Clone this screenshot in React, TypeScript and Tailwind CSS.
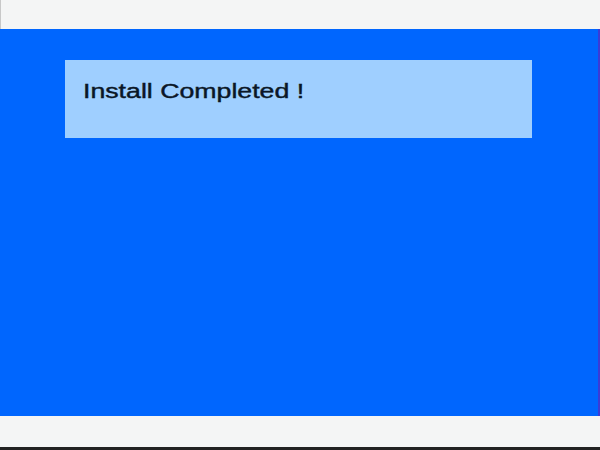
export default function App() {
  return (
    <div className="flex h-[450px] w-[600px] flex-col bg-[#f4f5f5] font-['Liberation_Sans',Arial,sans-serif]">
      <div className="h-[29px] border-l border-[#c8c8c8]" />
      <div className="h-[387px] border-r-2 border-[#3b3bd6] bg-[#0066fe] pl-[65px] pt-[31px]">
        <div className="h-[78px] w-[467px] bg-[#9fcfff] pl-[18px] pt-[21px]">
          <div className="inline-block origin-left scale-x-[1.335] text-[20px] leading-[20px] text-[#0a1626] [-webkit-text-stroke:0.4px_#0a1626]">
            Install Completed !
          </div>
        </div>
      </div>
      <div className="h-[31px]" />
      <div className="h-[3px] bg-[#222]" />
    </div>
  );
}
